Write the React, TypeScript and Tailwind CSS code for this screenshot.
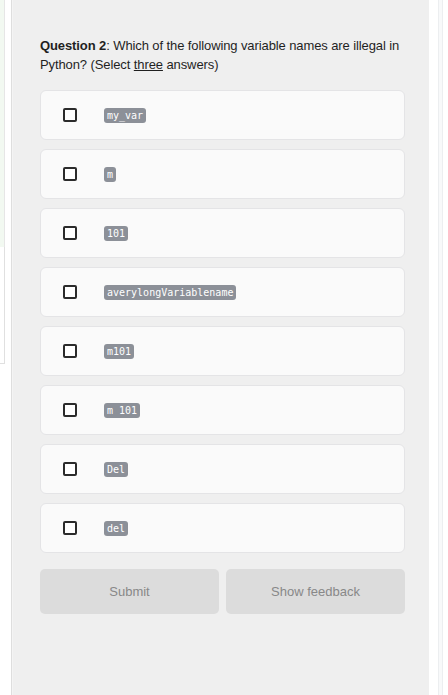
import React from "react";

const options = [
  "my_var",
  "m",
  "101",
  "averylongVariablename",
  "m101",
  "m 101",
  "Del",
  "del",
];

function Option({ name }: { name: string }) {
  return (
    <label className="flex h-[50px] items-center rounded-md border border-[#e4e4e6] bg-[#fafafa] pl-[22px]">
      <span className="h-[14px] w-[14px] shrink-0 rounded-[2px] border-2 border-[#2b2b2b] bg-white" />
      <code className="ml-[27px] whitespace-pre rounded-[3px] bg-[#8c9098] px-[3px] text-[10px] font-medium leading-[15px] text-white [font-family:'DejaVu_Sans_Mono',monospace]">
        {name}
      </code>
    </label>
  );
}

export default function App() {
  return (
    <div className="flex h-[695px] overflow-hidden bg-white [font-family:'Liberation_Sans',Arial,sans-serif]">
      <div className="flex w-[5px] shrink-0 flex-col">
        <div className="h-[247px] border-r border-[#e6e6e6] bg-[#f2f9f1]" />
        <div className="h-[117px] border-r border-b border-[#e0e0e0] bg-white" />
      </div>
      <div className="w-[6px] shrink-0" />
      <div className="w-px shrink-0 bg-[#dedede]" />
      <div className="w-px shrink-0 bg-[#f4f4f4]" />
      <main className="w-[416px] shrink-0 bg-[#efefef] pl-[27px] pr-[24px] pt-[36px]">
        <p className="text-[13px] leading-[19px] tracking-[-0.1px] text-[#1f1f1f]">
          <b>Question 2</b>: Which of the following variable names are illegal in
          Python? (Select <u>three</u> answers)
        </p>
        <div className="mt-[16px] flex flex-col gap-[9px]">
          {options.map((o) => (
            <Option key={o} name={o} />
          ))}
        </div>
        <div className="mt-[16px] flex gap-[7px]">
          <button className="h-[45px] flex-1 rounded-[5px] bg-[#dcdcdc] text-[13px] text-[#888]">
            Submit
          </button>
          <button className="h-[45px] flex-1 rounded-[5px] bg-[#dcdcdc] text-[13px] text-[#888]">
            Show feedback
          </button>
        </div>
      </main>
      <div className="w-[9px] shrink-0 bg-white" />
      <div className="w-px shrink-0 bg-[#eceef0]" />
      <div className="w-[3px] shrink-0 bg-[#f8f9fa]" />
      <div className="w-px shrink-0 bg-[#eceef0]" />
      <div className="flex-1 bg-white" />
    </div>
  );
}
